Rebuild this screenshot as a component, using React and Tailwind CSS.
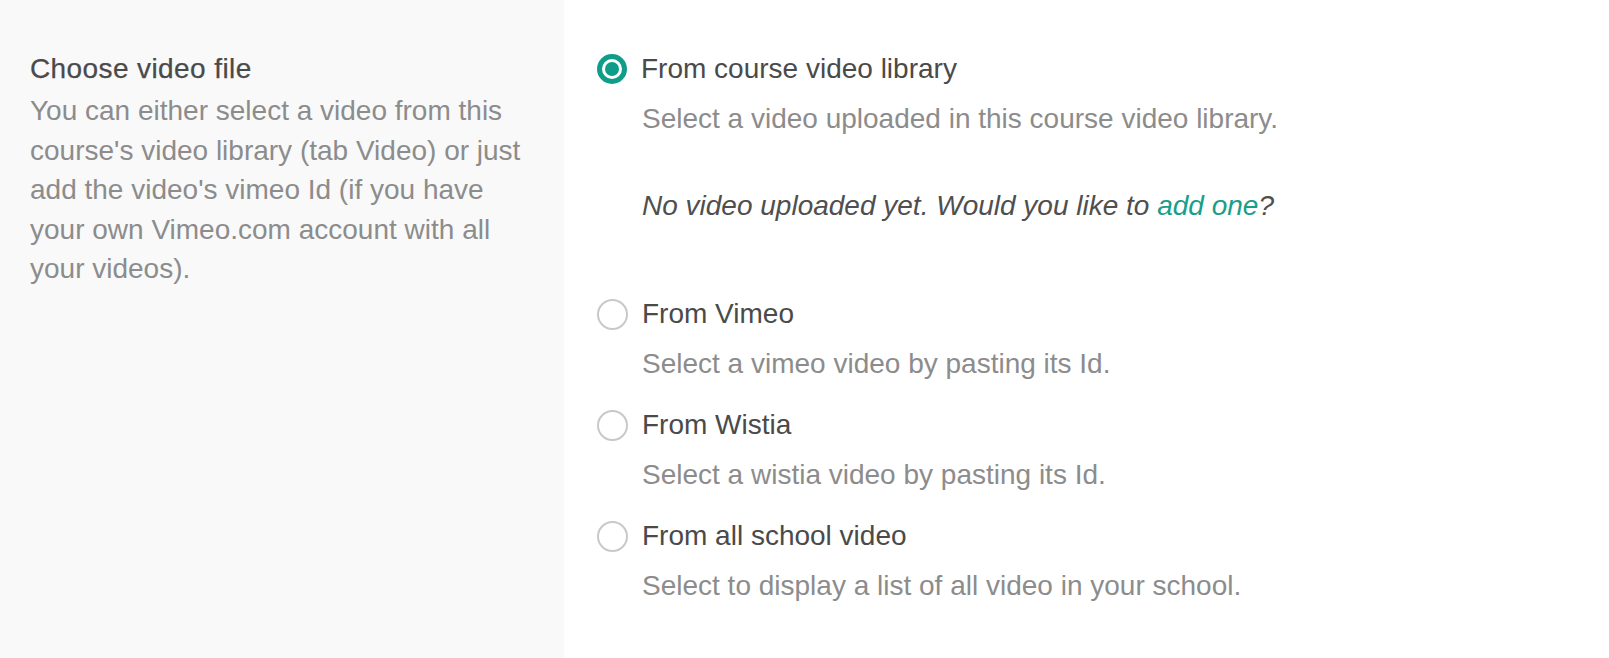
import React, { useState } from "react";

const options = [
  {
    id: "library",
    label: "From course video library",
    hint: "Select a video uploaded in this course video library.",
  },
  { id: "vimeo", label: "From Vimeo", hint: "Select a vimeo video by pasting its Id." },
  { id: "wistia", label: "From Wistia", hint: "Select a wistia video by pasting its Id." },
  {
    id: "school",
    label: "From all school video",
    hint: "Select to display a list of all video in your school.",
  },
];

function Radio({ checked }) {
  if (checked) {
    return (
      <span className="flex h-[30px] w-[30px] shrink-0 items-center justify-center rounded-full border-[5px] border-[#0f9d8a] bg-white">
        <span className="h-[14px] w-[14px] rounded-full bg-[#0f9d8a]" />
      </span>
    );
  }
  return (
    <span className="h-[31px] w-[31px] shrink-0 rounded-full border-2 border-[#c8c8c8] bg-white" />
  );
}

export default function App() {
  const [source, setSource] = useState("library");

  return (
    <div className="flex min-h-[658px] font-['Liberation_Sans',Arial,sans-serif] text-[28px] leading-[40px]">
      <aside className="w-[564px] shrink-0 bg-[#f9f9f9] pl-[30px] pr-[30px] pt-[49px]">
        <h2 className="tracking-[0.4px] text-[#4a4a4a] [-webkit-text-stroke:0.25px_#4a4a4a]">
          Choose video file
        </h2>
        <p className="mt-[2px] leading-[39.5px] text-[#8c8c8c]">
          You can either select a video from this course's video library (tab Video) or just add
          the video's vimeo Id (if you have your own Vimeo.com account with all your videos).
        </p>
      </aside>

      <div className="flex-1 bg-white pl-[33px] pt-[49px]">
        {options.map((opt) => (
          <div key={opt.id} className="mb-[21px]">
            <label
              className="flex cursor-pointer items-center gap-[14px] text-[#4a4a4a]"
              onClick={() => setSource(opt.id)}
            >
              <Radio checked={source === opt.id} />
              <span>{opt.label}</span>
            </label>
            <div className="mt-[10px] pl-[45px] text-[#8c8c8c]">{opt.hint}</div>
            {opt.id === "library" && source === "library" && (
              <div className="mb-[68px] mt-[47px] pl-[45px] italic text-[#4f4f4f]">
                No video uploaded yet. Would you like to{" "}
                <a href="#" className="text-[#1a9e8a]">
                  add one
                </a>
                ?
              </div>
            )}
          </div>
        ))}
      </div>
    </div>
  );
}
